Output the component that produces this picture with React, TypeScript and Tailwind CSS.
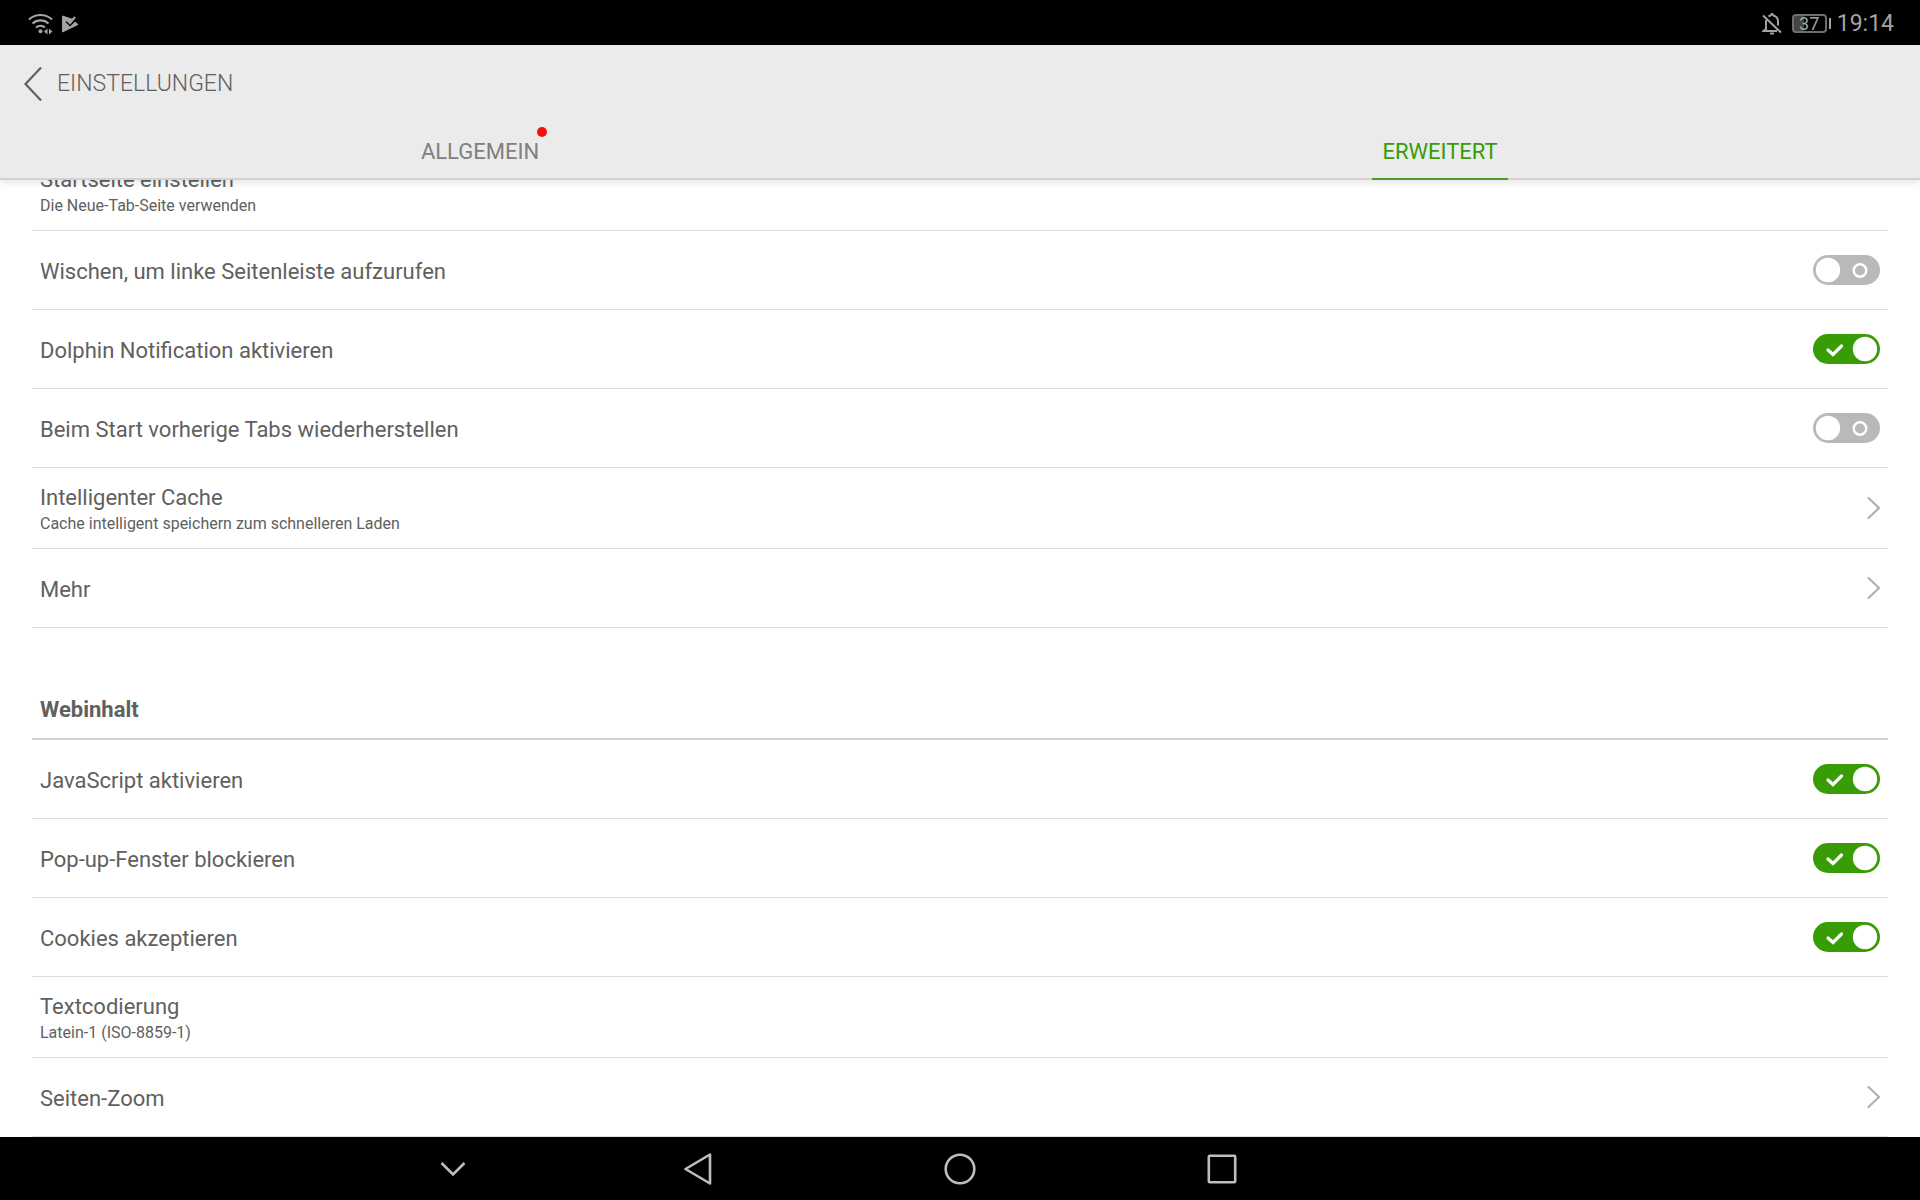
import { useState, type ReactNode } from "react";

type Setting = {
  id: string;
  label: string;
  hint?: string;
  kind: "switch" | "link" | "plain";
  on?: boolean;
};

const generalSettings: Setting[] = [
  { id: "startpage", label: "Startseite einstellen", hint: "Die Neue-Tab-Seite verwenden", kind: "plain" },
  { id: "swipe", label: "Wischen, um linke Seitenleiste aufzurufen", kind: "switch", on: false },
  { id: "notification", label: "Dolphin Notification aktivieren", kind: "switch", on: true },
  { id: "restore", label: "Beim Start vorherige Tabs wiederherstellen", kind: "switch", on: false },
  { id: "cache", label: "Intelligenter Cache", hint: "Cache intelligent speichern zum schnelleren Laden", kind: "link" },
  { id: "more", label: "Mehr", kind: "link" },
];

const webSettings: Setting[] = [
  { id: "javascript", label: "JavaScript aktivieren", kind: "switch", on: true },
  { id: "popups", label: "Pop-up-Fenster blockieren", kind: "switch", on: true },
  { id: "cookies", label: "Cookies akzeptieren", kind: "switch", on: true },
  { id: "encoding", label: "Textcodierung", hint: "Latein-1 (ISO-8859-1)", kind: "plain" },
  { id: "zoom", label: "Seiten-Zoom", kind: "link" },
];

const rowClass =
  "flex min-h-[79px] flex-1 items-center justify-between border-b border-[#dedede] px-2 text-left";

function StatusBar() {
  return (
    <div className="flex h-[45px] items-center justify-between bg-black pt-0.5 pr-[26px] pl-7 text-[#a3a3a3]">
      <div className="flex items-center gap-2">
        <svg width="26" height="22" viewBox="0 0 26 22" fill="none" stroke="currentColor" strokeWidth="2.2">
          <path d="M1 6.5a17 17 0 0 1 23 0" />
          <path d="M4.5 10.5a12 12 0 0 1 16 0" />
          <path d="M8 14.5a7 7 0 0 1 9 0" />
          <circle cx="12.5" cy="18.3" r="2" fill="currentColor" stroke="none" />
          <path d="M19.5 15.5v6l-3.5-3zM21 15.5v6l3.5-3z" fill="currentColor" stroke="none" />
        </svg>
        <svg width="17" height="18" viewBox="0 0 17 18">
          <path d="M.5 1v16L16 9.5l-3-2.5-5 4.500L4 7.500l2-2 2 2 3-3z" fill="currentColor" stroke="currentColor" strokeLinejoin="round" />
          <path d="M4 6.500l4 4L15 3.500" fill="none" stroke="#000" strokeWidth="1.200" />
          <path d="M5 5l3 3L13 2" fill="none" stroke="currentColor" strokeWidth="2.200" />
        </svg>
      </div>
      <div className="flex items-center">
        <svg width="20" height="22" viewBox="0 0 20 22" fill="none" stroke="currentColor" strokeWidth="2">
          <path d="M1 2.500l18 17" />
          <path d="M4 7v9l-2.500 2H15M6.500 3.500l2-1 1.500-2 1.500 2c3 .8 4.500 3 4.500 6v4" />
          <path d="M8 20.500h4" />
        </svg>
        <div className="ml-[10px] flex items-center gap-0.5">
          <span className="flex h-[19px] w-[35px] items-center justify-center rounded-[4px] border-2 border-[#6e6e6e] bg-linear-to-r from-[#444444] from-33% to-transparent to-33% text-[18px] leading-none">
            37
          </span>
          <span className="h-[11px] w-[2px] bg-current" />
        </div>
        <span className="ml-1.5 text-[23px] leading-none">19:14</span>
      </div>
    </div>
  );
}

function Switch({ id, defaultOn }: { id: string; defaultOn?: boolean }) {
  const [on, setOn] = useState(Boolean(defaultOn));

  return (
    <span className="relative flex h-[30px] w-[67px] items-center">
      <input
        id={id}
        type="checkbox"
        role="switch"
        checked={on}
        onChange={(event) => setOn(event.target.checked)}
        className="absolute inset-0 cursor-pointer appearance-none rounded-full bg-[#b9b9b9] checked:bg-[#389c05]"
      />
      <svg className="pointer-events-none relative" width="67" height="30" viewBox="0 0 67 30" fill="none" stroke="#fff">
        {on ? (
          <>
            <circle cx="52" cy="15" r="12.200" fill="#fff" stroke="none" />
            <path d="M15 16l5 4.500 8.500-8.500" strokeWidth="3.200" strokeLinecap="round" />
          </>
        ) : (
          <>
            <circle cx="15" cy="15" r="12.200" fill="#fff" stroke="none" />
            <circle cx="47" cy="15.500" r="6.300" strokeWidth="2.400" />
          </>
        )}
      </svg>
    </span>
  );
}

function RowText({ label, hint }: { label: string; hint?: string }) {
  if (!hint) {
    return <span className="pt-1 text-[22px] leading-7">{label}</span>;
  }

  return (
    <span className="flex flex-col pt-1">
      <span className="text-[22px] leading-7">{label}</span>
      <span className="text-[16px] leading-6">{hint}</span>
    </span>
  );
}

function SettingRow({ setting }: { setting: Setting }) {
  if (setting.kind === "switch") {
    return (
      <label htmlFor={setting.id} className={rowClass}>
        <RowText label={setting.label} />
        <Switch id={setting.id} defaultOn={setting.on} />
      </label>
    );
  }

  return (
    <button type="button" className={rowClass}>
      <RowText label={setting.label} hint={setting.hint} />
      {setting.kind === "link" && (
        <svg width="13" height="22" viewBox="0 0 13 22" fill="none" stroke="#b0b0b0" strokeWidth="2.200" strokeLinecap="round">
          <path d="M1.500 1l10.500 10L1.500 21" />
        </svg>
      )}
    </button>
  );
}

function NavButton({ label, children }: { label: string; children: ReactNode }) {
  return (
    <button type="button" aria-label={label} className="flex items-center justify-center">
      {children}
    </button>
  );
}

function NavigationBar() {
  return (
    <nav className="flex h-[63px] justify-center bg-black text-[#bdbdbd]">
      <div className="grid w-[1312px] max-w-full grid-cols-5">
        <button type="button" aria-label="Ausblenden" className="flex items-center justify-center pl-9">
          <svg width="26" height="16" viewBox="0 0 26 16" fill="none" stroke="currentColor" strokeWidth="2.600">
            <path d="M1.500 2L13 13.500 24.500 2" />
          </svg>
        </button>
        <NavButton label="Zurück">
          <svg width="28" height="32" viewBox="0 0 28 32" fill="none" stroke="currentColor" strokeWidth="2.600" strokeLinejoin="round">
            <path d="M26 1.500v29L1.500 16z" />
          </svg>
        </NavButton>
        <NavButton label="Startbildschirm">
          <svg width="32" height="32" viewBox="0 0 32 32" fill="none" stroke="currentColor" strokeWidth="2.600">
            <circle cx="16" cy="16" r="14.300" />
          </svg>
        </NavButton>
        <NavButton label="Letzte Apps">
          <svg width="30" height="30" viewBox="0 0 30 30" fill="none" stroke="currentColor" strokeWidth="2.600">
            <rect x="1.800" y="1.800" width="26.400" height="26.400" rx="1" />
          </svg>
        </NavButton>
      </div>
    </nav>
  );
}

export default function App() {
  return (
    <div className="flex min-h-screen flex-col bg-white font-['Roboto',sans-serif] text-[#606060]">
      <StatusBar />
      <header className="relative z-10 border-b-2 border-[#d2d2d2] bg-[#ebebeb] shadow-[0_2px_8px_rgba(0,0,0,0.12)]">
        <div className="flex h-[75px] items-center gap-[15px] px-6 pt-0.5">
          <button type="button" aria-label="Zurück">
            <svg width="18" height="36" viewBox="0 0 18 36" fill="none" stroke="#606060" strokeWidth="2.200">
              <path d="M17 1.500L1.500 18 17 34.500" />
            </svg>
          </button>
          <h1 className="text-[23px] leading-8 font-light">EINSTELLUNGEN</h1>
        </div>
        <div role="tablist" className="-mb-0.5 flex h-[60px]">
          <div className="flex flex-1 justify-center">
            <button type="button" role="tab" aria-selected="false" className="relative px-2 pt-0.5 text-[22px] text-[#808080]">
              ALLGEMEIN
              <span className="absolute top-[7px] right-0 size-2.5 rounded-full bg-[#f5100c]" />
            </button>
          </div>
          <div className="flex flex-1 justify-center">
            <button
              type="button"
              role="tab"
              aria-selected="true"
              className="border-b-2 border-[#4d9a2c] px-2.5 pt-1 text-[22px] text-[#389c05]"
            >
              ERWEITERT
            </button>
          </div>
        </div>
      </header>
      <main className="-mt-[30px] flex flex-1 flex-col px-8">
        {generalSettings.map((setting) => (
          <SettingRow key={setting.id} setting={setting} />
        ))}
        <h2 className="flex h-[112px] items-end border-b-2 border-[#d0d0d0] px-2 pb-[14px] text-[22px] leading-7 font-bold">
          Webinhalt
        </h2>
        {webSettings.map((setting) => (
          <SettingRow key={setting.id} setting={setting} />
        ))}
      </main>
      <NavigationBar />
    </div>
  );
}
